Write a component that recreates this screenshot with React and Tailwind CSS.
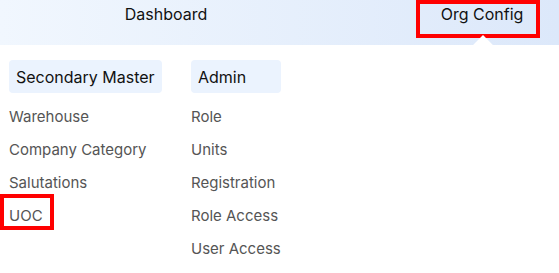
import React from "react";

const secondary = ["Warehouse", "Company Category", "Salutations", "UOC"];
const admin = ["Role", "Units", "Registration", "Role Access", "User Access"];

function Column({ title, items, width, pillWidth, mark }) {
  return (
    <div className="flex flex-col" style={{ width }}>
      <div
        className="self-start bg-[#ebf3fe] rounded-[4px] h-[33px] px-[7px] flex items-center text-[16px] text-[#111]"
        style={{ width: pillWidth }}
      >
        {title}
      </div>
      <div className="flex flex-col mt-[8px]">
        {items.map((it) => (
          <div key={it} className="relative h-[33px] flex items-center">
            {it}
            {it === mark && (
              <div className="absolute left-[-9px] top-[-6px] w-[54px] h-[36px] border-[4px] border-[#ff0000]" />
            )}
          </div>
        ))}
      </div>
    </div>
  );
}

export default function App() {
  return (
    <div
      className="w-[559px] h-[273px] bg-white overflow-hidden"
      style={{ fontFamily: "Inter, 'Noto Sans', sans-serif" }}
    >
      <nav className="relative h-[45px] bg-gradient-to-r from-[#f1f7fe] to-[#dce8fa] flex items-start text-[16px] text-[#111]">
        <div className="w-[332px] flex justify-center pt-[2px]">Dashboard</div>
        <div className="ml-[84px] w-[124px] h-[38px] border-[4px] border-[#ff0000] flex justify-center pl-[8px]">
          <span className="-mt-[2px]">Org Config</span>
        </div>
        <div className="absolute left-[476px] top-[38px] w-[14px] h-[14px] bg-white rotate-45" />
      </nav>
      <div className="relative flex pl-[9px] pt-[15px] text-[15px] text-[#555]">
        <Column title="Secondary Master" items={secondary} width={182} mark="UOC" />
        <Column title="Admin" items={admin} width={200} pillWidth={90} />
      </div>
    </div>
  );
}
